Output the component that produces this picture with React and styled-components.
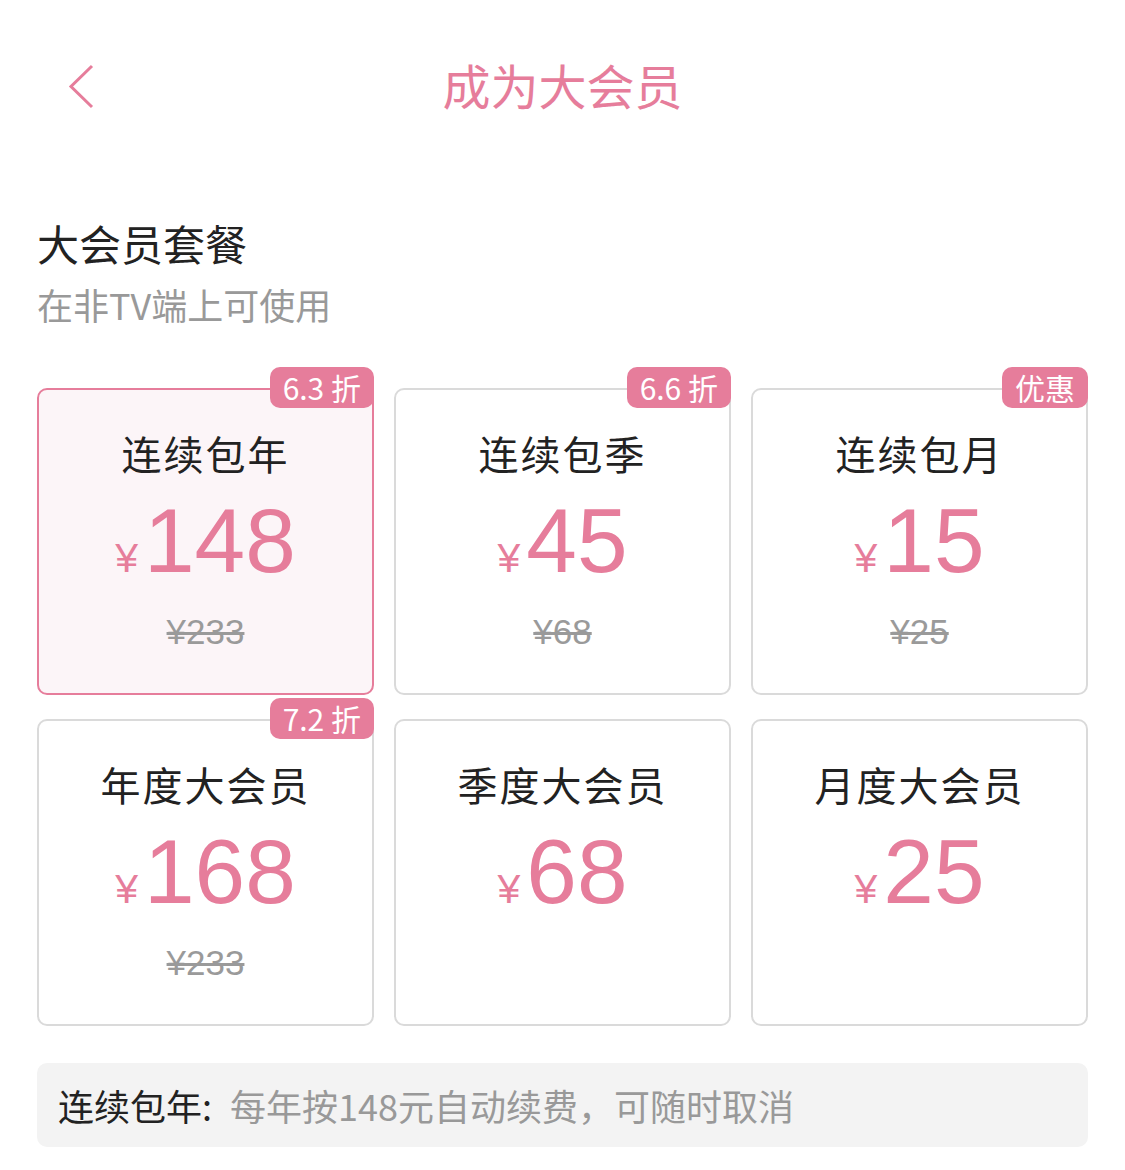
import React from 'react'
import styled, { createGlobalStyle } from 'styled-components'

const PINK = '#e67d9b'

const GlobalStyle = createGlobalStyle`
  body {
    margin: 0;
    background: #fff;
    font-family: "Noto Sans CJK SC", "Noto Sans", sans-serif;
  }
`

const plans = [
  { name: '连续包年', price: '148', orig: '¥233', badge: '6.3 折', active: true },
  { name: '连续包季', price: '45', orig: '¥68', badge: '6.6 折' },
  { name: '连续包月', price: '15', orig: '¥25', badge: '优惠' },
  { name: '年度大会员', price: '168', orig: '¥233', badge: '7.2 折' },
  { name: '季度大会员', price: '68' },
  { name: '月度大会员', price: '25' },
]

const App = () => {
  return (
    <Page>
      <GlobalStyle />
      <Header>
        <BackButton>
          <svg width="30" height="46" viewBox="0 0 30 46">
            <polyline points="25,3 4,23.5 25,44" fill="none" stroke={PINK} strokeWidth="3" />
          </svg>
        </BackButton>
        <Title>成为大会员</Title>
        <span />
      </Header>

      <Section>
        <SectionTitle>大会员套餐</SectionTitle>
        <SectionSub>在非TV端上可使用</SectionSub>
      </Section>

      <Grid>
        {plans.map((p) => (
          <Card key={p.name} $active={p.active}>
            {p.badge && <Badge>{p.badge}</Badge>}
            <PlanName>{p.name}</PlanName>
            <Price>
              <Yen>¥</Yen>
              <Amount>{p.price}</Amount>
            </Price>
            {p.orig && <Orig>{p.orig}</Orig>}
          </Card>
        ))}
      </Grid>

      <Note>
        <NoteLabel>连续包年:</NoteLabel>
        <NoteText>每年按148元自动续费，可随时取消</NoteText>
      </Note>
    </Page>
  )
}

const Page = styled.div`
  width: 1125px;
  padding: 0 37px;
  box-sizing: border-box;
`

const Header = styled.header`
  height: 176px;
  display: grid;
  grid-template-columns: 1fr auto 1fr;
  align-items: center;
`

const BackButton = styled.div`
  display: flex;
  align-items: center;
  padding-left: 30px;
  margin-top: -4px;
`

const Title = styled.h1`
  margin: 0 0 8px;
  font-size: 48px;
  font-weight: 400;
  color: ${PINK};
`

const Section = styled.div`
  margin-top: 41px;
`

const SectionTitle = styled.div`
  font-size: 42px;
  line-height: 52px;
  color: #222;
`

const SectionSub = styled.div`
  font-size: 36px;
  line-height: 46px;
  color: #999;
  margin-top: 12px;
`

const Grid = styled.div`
  margin-top: 61px;
  display: grid;
  grid-template-columns: repeat(3, 1fr);
  column-gap: 20px;
  row-gap: 24px;
`

const Card = styled.div`
  position: relative;
  height: 307px;
  box-sizing: border-box;
  border: 2px solid ${({ $active }) => ($active ? PINK : '#dadada')};
  background: ${({ $active }) => ($active ? '#fcf5f8' : '#fff')};
  border-radius: 10px;
  display: flex;
  flex-direction: column;
  align-items: center;
  padding-top: 37px;
`

const Badge = styled.div`
  position: absolute;
  top: -23px;
  right: -2px;
  height: 41px;
  padding: 0 13px;
  background: ${PINK};
  color: #fff;
  border-radius: 10px;
  font-size: 30px;
  line-height: 41px;
`

const PlanName = styled.div`
  font-size: 40px;
  line-height: 52px;
  color: #222;
  letter-spacing: 2px;
`

const Price = styled.div`
  display: flex;
  align-items: baseline;
  color: ${PINK};
  font-family: "Liberation Sans", Arial, sans-serif;
  margin-top: 10px;
  height: 104px;
`

const Yen = styled.span`
  font-size: 41px;
  margin-right: 6px;
`

const Amount = styled.span`
  font-size: 91px;
  line-height: 104px;
`

const Orig = styled.div`
  margin-top: 18px;
  font-family: "Liberation Sans", Arial, sans-serif;
  font-size: 35px;
  line-height: 42px;
  color: #9a9a9a;
  text-decoration: line-through;
`

const Note = styled.div`
  margin-top: 37px;
  height: 84px;
  background: #f3f3f3;
  border-radius: 10px;
  display: flex;
  align-items: center;
  padding: 0 21px;
  font-size: 36px;
`

const NoteLabel = styled.span`
  color: #222;
  margin-right: 18px;
`

const NoteText = styled.span`
  color: #999;
`

export default App
